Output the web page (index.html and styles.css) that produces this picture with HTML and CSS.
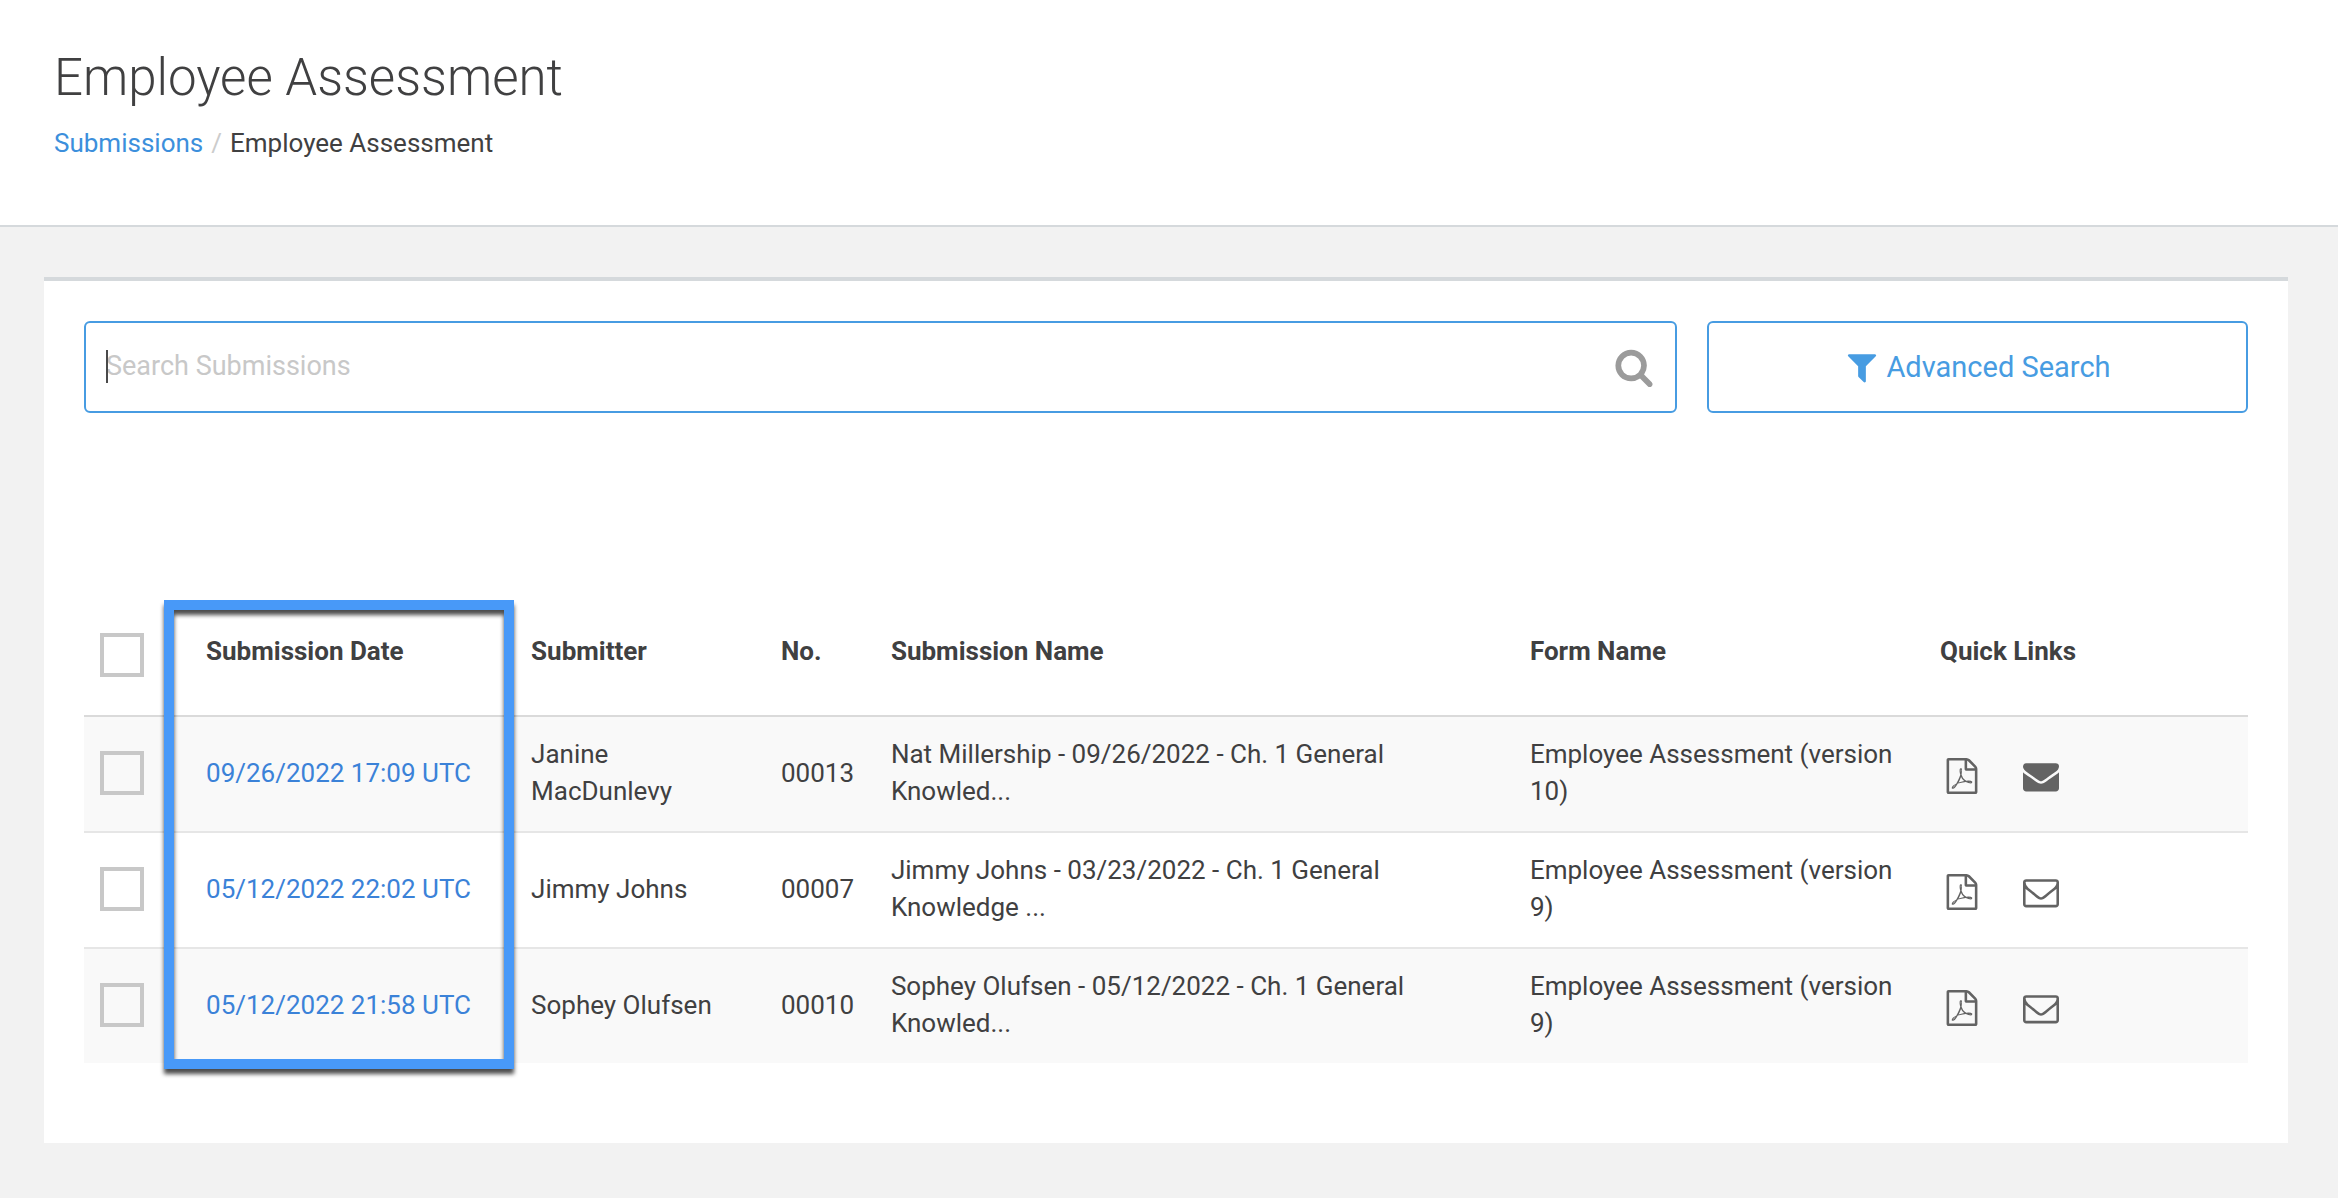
FILE: index.html
```html
<!DOCTYPE html>
<html lang="en">
<head>
<meta charset="utf-8">
<meta name="viewport" content="width=device-width, initial-scale=1">
<title>Employee Assessment</title>
<link rel="stylesheet" href="styles.css">
</head>
<body>
<svg class="sprite" aria-hidden="true">
  <symbol id="search" viewBox="0 0 1792 1792"><path d="M1216 832q0-185-131.500-316.500t-316.500-131.500-316.500 131.500-131.500 316.500 131.500 316.500 316.500 131.500 316.500-131.500 131.500-316.500zm512 832q0 52-38 90t-90 38q-54 0-90-38l-343-342q-179 124-399 124-143 0-273.500-55.500t-225-150-150-225-55.500-273.500 55.500-273.500 150-225 225-150 273.500-55.500 273.500 55.500 225 150 150 225 55.500 273.500q0 220-124 399l343 343q37 37 37 90z"/></symbol>
  <symbol id="filter" viewBox="0 0 1792 1792"><path d="M1595 295q17 41-14 70l-493 493v742q0 42-39 59-13 5-25 5-27 0-45-19l-256-256q-19-19-19-45v-486l-493-493q-31-29-14-70 17-39 59-39h1280q42 0 59 39z"/></symbol>
  <symbol id="mail" viewBox="0 0 1792 1792"><path d="M1792 710v794q0 66-47 113t-113 47h-1472q-66 0-113-47t-47-113v-794q44 49 101 87 362 246 497 345 57 42 92.500 65.500t94.500 48 110 24.500h2q51 0 110-24.500t94.500-48 92.500-65.500q170-123 498-345 57-39 100-87zm0-294q0 79-49 151t-122 123q-376 261-468 325-10 7-42.500 31t-54 38.500-52 32.500-57.500 27-50 9h-2q-23 0-50-9t-57.500-27-52-32.500-54-38.500-42.500-31q-91-64-262-182.500t-205-142.500q-62-42-117-115.500t-55-136.500q0-78 41.500-130t118.500-52h1472q65 0 112.500 47t47.500 113z"/></symbol>
  <symbol id="mail-open" viewBox="0 0 1792 1792"><path d="M1664 1504v-768q-32 36-69 66-268 206-426 338-51 43-83 67t-86.500 48.500-102.500 24.500h-2q-48 0-102.500-24.500t-86.500-48.500-83-67q-158-132-426-338-37-30-69-66v768q0 13 9.500 22.500t22.500 9.500h1472q13 0 22.500-9.500t9.500-22.500zm0-1051v-24.500l-.5-13-3-12.500-5.500-9-9-7.500-14-2.500h-1472q-13 0-22.500 9.500t-9.500 22.500q0 168 147 284 193 152 401 317 6 5 35 29.500t46 37.500 44.500 31.500 50.500 27.500 43 9h2q20 0 43-9t50.500-27.500 44.500-31.500 46-37.500 35-29.500q208-165 401-317 54-43 100.500-115.500t46.500-131.500zm128-37v1088q0 66-47 113t-113 47h-1472q-66 0-113-47t-47-113v-1088q0-66 47-113t113-47h1472q66 0 113 47t47 113z"/></symbol>
  <symbol id="pdf" viewBox="0 0 1792 1792"><path d="M1596 380q28 28 48 76t20 88v1152q0 40-28 68t-68 28h-1344q-40 0-68-28t-28-68v-1600q0-40 28-68t68-28h896q40 0 88 20t76 48zm-444-244v376h376q-10-29-22-41l-313-313q-12-12-41-22zm384 1528v-1024h-416q-40 0-68-28t-28-68v-416h-768v1536h1280zm-514-593q33 26 84 56 59-7 117-7 147 0 177 49 16 22 2 52 0 1-1 2l-2 2v1q-6 38-71 38-48 0-115-20t-130-53q-221 24-392 83-153 262-242 262-15 0-28-7l-24-12q-1-1-6-5-10-10-6-36 9-40 56-91.500t132-96.500q14-9 23 6 2 2 2 4 52-85 107-197 68-136 104-262-24-82-30.500-159.500t6.500-127.500q11-40 42-40h22q23 0 35 15 18 21 9 68-2 6-4 8 1 3 1 8v30q-2 123-14 192 55 164 146 238zm-576 411q52-24 137-158-51 40-87.500 84t-49.500 74zm398-920q-15 42-2 132 1-7 7-44 0-3 7-43 1-4 4-8-1-1-1-2t-1-2-1-3q-1-22-13-36 0 1-1 2v2zm-124 661q135-54 284-81-2-1-13-9.500t-16-13.500q-76-67-127-176-27 86-83 197-30 56-45 83zm646-16q-24-24-140-24 76 28 124 28 14 0 18-1 0-1-2-3z"/></symbol>
</svg>

<header class="page-header">
  <h1 class="page-title">Employee Assessment</h1>
  <nav class="breadcrumb" aria-label="Breadcrumb">
    <a class="link" href="#">Submissions</a>
    <span class="divider">/</span>
    <span>Employee Assessment</span>
  </nav>
</header>

<main class="card">
  <form class="search-row">
    <div class="search-box">
      <input class="search-input" type="text" placeholder="Search Submissions" aria-label="Search Submissions">
      <span class="caret"></span>
      <svg class="search-icon" aria-hidden="true"><use href="#search"/></svg>
    </div>
    <button class="advanced" type="button">
      <svg class="icon" aria-hidden="true"><use href="#filter"/></svg>
      <span>Advanced Search</span>
    </button>
  </form>

  <div class="table-wrap">
    <table class="submissions">
      <colgroup>
        <col class="col-check"><col class="col-date"><col class="col-person"><col class="col-number"><col class="col-name"><col class="col-form"><col>
      </colgroup>
      <thead>
        <tr>
          <th><input class="check" type="checkbox" aria-label="Select all"></th>
          <th>Submission Date</th>
          <th>Submitter</th>
          <th>No.</th>
          <th>Submission Name</th>
          <th>Form Name</th>
          <th>Quick Links</th>
        </tr>
      </thead>
      <tbody>
        <tr>
          <td><input class="check" type="checkbox" aria-label="Select 00013"></td>
          <td><a class="date" href="#">09/26/2022 17:09 UTC</a></td>
          <td>Janine<br>MacDunlevy</td>
          <td>00013</td>
          <td>Nat Millership - 09/26/2022 - Ch. 1 General<br>Knowled...</td>
          <td>Employee Assessment (version<br>10)</td>
          <td><div class="links"><a href="#" aria-label="PDF"><svg class="icon"><use href="#pdf"/></svg></a><a href="#" aria-label="Email"><svg class="icon"><use href="#mail"/></svg></a></div></td>
        </tr>
        <tr>
          <td><input class="check" type="checkbox" aria-label="Select 00007"></td>
          <td><a class="date" href="#">05/12/2022 22:02 UTC</a></td>
          <td>Jimmy Johns</td>
          <td>00007</td>
          <td>Jimmy Johns - 03/23/2022 - Ch. 1 General<br>Knowledge ...</td>
          <td>Employee Assessment (version<br>9)</td>
          <td><div class="links"><a href="#" aria-label="PDF"><svg class="icon"><use href="#pdf"/></svg></a><a href="#" aria-label="Email"><svg class="icon"><use href="#mail-open"/></svg></a></div></td>
        </tr>
        <tr>
          <td><input class="check" type="checkbox" aria-label="Select 00010"></td>
          <td><a class="date" href="#">05/12/2022 21:58 UTC</a></td>
          <td>Sophey Olufsen</td>
          <td>00010</td>
          <td>Sophey Olufsen - 05/12/2022 - Ch. 1 General<br>Knowled...</td>
          <td>Employee Assessment (version<br>9)</td>
          <td><div class="links"><a href="#" aria-label="PDF"><svg class="icon"><use href="#pdf"/></svg></a><a href="#" aria-label="Email"><svg class="icon"><use href="#mail-open"/></svg></a></div></td>
        </tr>
      </tbody>
    </table>
    <div class="highlight"></div>
  </div>
</main>
</body>
</html>
```
FILE: styles.css
```css
* {
  box-sizing: border-box;
}

body {
  margin: 0;
  background: #f2f2f2;
  color: #404041;
  font-family: Roboto, "Liberation Sans", sans-serif;
  font-size: 26px;
  line-height: 37px;
}

a {
  text-decoration: none;
}

.sprite {
  display: none;
}

.icon {
  display: block;
  width: 36px;
  height: 36px;
  fill: currentColor;
}

.page-header {
  padding: 45px 54px 63px;
  background: #fff;
  border-bottom: 2px solid #d5d9dc;
}

.page-title {
  margin: 0 0 15px;
  font-size: 51px;
  font-weight: 300;
  line-height: 65px;
}

.breadcrumb {
  display: flex;
  gap: 8px;
}

.link {
  color: #3c8fdc;
}

.divider {
  color: #ccc;
}

.card {
  margin: 50px 50px 52px 44px;
  padding: 40px 40px 80px;
  background: #fff;
  border-top: 4px solid #d5d9dc;
}

.search-row {
  display: flex;
  gap: 30px;
  margin-bottom: 174px;
}

.search-box {
  position: relative;
  flex: 1;
}

.search-input {
  display: block;
  width: 100%;
  height: 92px;
  padding: 0 80px 2px 20px;
  border: 2px solid #479ce2;
  border-radius: 6px;
  outline: 0;
  background: #fff;
  color: inherit;
  font: inherit;
  font-size: 27px;
}

.search-input::placeholder {
  color: #c8c8c8;
  opacity: 1;
}

.caret {
  position: absolute;
  top: 29px;
  left: 22px;
  width: 2px;
  height: 33px;
  background: #4a4a4a;
}

.search-icon {
  position: absolute;
  top: 26px;
  right: 23px;
  width: 40px;
  height: 40px;
  fill: #9b9b9b;
}

.advanced {
  display: flex;
  align-items: center;
  justify-content: center;
  gap: 6px;
  width: 25%;
  border: 2px solid #479ce2;
  border-radius: 6px;
  background: #fff;
  color: #479ce2;
  font: inherit;
  font-size: 29px;
}

.table-wrap {
  position: relative;
}

.submissions {
  width: 100%;
  table-layout: fixed;
  border-collapse: separate;
  border-spacing: 0;
}

.col-check { width: 4.9%; }
.col-date { width: 15.02%; }
.col-person { width: 11.55%; }
.col-number { width: 5.08%; }
.col-name { width: 29.53%; }
.col-form { width: 18.95%; }

.submissions th {
  padding: 46px 16px 38px;
  font-weight: 700;
  text-align: left;
  vertical-align: top;
}

.submissions td {
  padding: 19px 16px 21px;
  border-top: 2px solid #e6e6e6;
  white-space: nowrap;
}

.submissions tbody tr:first-child td {
  border-top-color: #dadada;
}

.submissions tbody tr:nth-child(odd) {
  background: #f9f9f9;
}

.check {
  display: block;
  appearance: none;
  width: 44px;
  height: 44px;
  margin: 0;
  border: 4px solid #c8c8c8;
  background: transparent;
}

.date {
  color: #3b82d8;
}

.links {
  display: flex;
  gap: 43px;
  padding: 6px 4px 0;
}

.links a {
  color: #636363;
}

.highlight {
  position: absolute;
  top: 13px;
  bottom: -6px;
  left: 3.7%;
  width: 16.17%;
  border: 10px solid #4899f8;
  filter: drop-shadow(0 5px 2px rgba(0, 0, 0, 0.7));
  pointer-events: none;
}
```
